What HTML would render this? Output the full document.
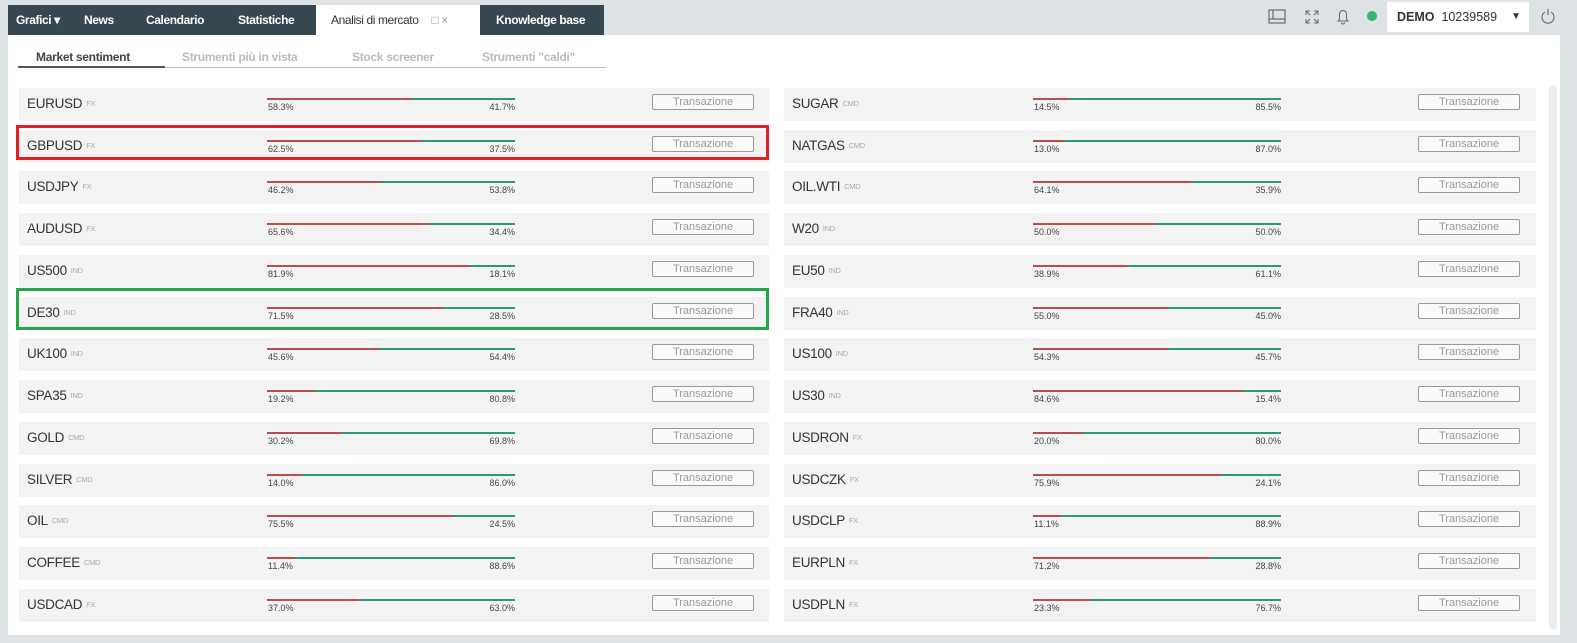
<!DOCTYPE html>
<html><head><meta charset="utf-8"><style>
*{margin:0;padding:0;box-sizing:border-box}
body{width:1577px;height:643px;background:#dde2e5;font-family:"Liberation Sans",sans-serif;position:relative;overflow:hidden}
.tabs{position:absolute;left:8px;top:5px;height:30px;width:596px;background:#37474f}
.tab{position:absolute;top:0;height:30px;line-height:30px;color:#fff;font-size:12px;font-weight:bold;letter-spacing:-0.4px}
.act{background:#fff;color:#333;font-weight:normal}
.panel{position:absolute;left:8px;top:35px;width:1552px;height:600px;background:#fff}
.sub{position:absolute;top:50px;font-size:12px;font-weight:bold;color:#bbb;letter-spacing:-0.3px}
.row{position:absolute;height:33px;background:#f3f3f3;width:750px}
.n{position:absolute;left:8px;top:8px;font-size:13.5px;color:#333;letter-spacing:-0.3px}
.n small{font-size:7.5px;color:#aaa;margin-left:4px;vertical-align:2px}
.b{position:absolute;left:248px;top:10px;width:248px;height:2px;background:#2b9a78}
.b i{display:block;height:2px;background:#b5504c}
.p1,.p2{position:absolute;top:14px;font-size:9px;color:#444}
.p1{left:249px}.p2{left:436px;width:60px;text-align:right}
.t{position:absolute;left:633px;top:6px;width:102px;height:16px;border:1px solid #999;border-radius:2px;font-size:11px;color:#999;display:flex;align-items:center;justify-content:center;background:#fafafa}
.box{position:absolute;border:3px solid;}
</style></head><body>
<div class="tabs">
<div class="tab" style="left:8px">Grafici ▾</div>
<div class="tab" style="left:76px">News</div>
<div class="tab" style="left:138px">Calendario</div>
<div class="tab" style="left:230px">Statistiche</div>
<div class="tab act" style="left:308px;width:164px;padding-left:15px">Analisi di mercato <span style="color:#999;margin-left:10px">□ ×</span></div>
<div class="tab" style="left:488px">Knowledge base</div>
</div>
<svg style="position:absolute;left:1268px;top:9px" width="18" height="16"><rect x="1" y="1" width="16" height="13" fill="none" stroke="#555"/><line x1="1" y1="10" x2="17" y2="10" stroke="#555"/><line x1="5" y1="1" x2="5" y2="10" stroke="#555"/></svg>
<svg style="position:absolute;left:1304px;top:9px" width="16" height="16" stroke="#666" fill="none"><path d="M2 6V2H6M10 2H14V6M14 10V14H10M6 14H2V10M2 2L6 6M14 2L10 6M14 14L10 10M2 14L6 10"/></svg>
<svg style="position:absolute;left:1336px;top:8px" width="14" height="17" stroke="#666" fill="none"><path d="M2 13H12L10.5 11V6A3.5 3.5 0 0 0 3.5 6V11Z M5.5 14.5A1.5 1.5 0 0 0 8.5 14.5"/></svg>
<div style="position:absolute;left:1367px;top:11px;width:10px;height:10px;border-radius:50%;background:#2bb673"></div>
<div style="position:absolute;left:1387px;top:2px;width:142px;height:30px;background:#fff;font-size:12.5px;line-height:30px;color:#333;padding-left:10px"><b>DEMO</b>&nbsp; 10239589 <span style="position:absolute;right:8px;font-size:10px">▼</span></div>
<svg style="position:absolute;left:1540px;top:8px" width="16" height="17" stroke="#555" fill="none"><path d="M5 4A6 6 0 1 0 11 4M8 1V7"/></svg>
<div class="panel"></div>
<div style="position:absolute;left:18px;top:67px;width:588px;height:1px;background:#bbb"></div>
<div style="position:absolute;left:18px;top:66px;width:147px;height:2px;background:#555"></div>
<div class="sub" style="left:36px;color:#444">Market sentiment</div>
<div class="sub" style="left:182px">Strumenti più in vista</div>
<div class="sub" style="left:352px">Stock screener</div>
<div class="sub" style="left:482px">Strumenti "caldi"</div>
<div style="position:absolute;left:1549px;top:85px;width:8px;height:545px;background:#eee;border-radius:4px"></div>

<div class="row" style="left:19px;top:88px"><div class="n">EURUSD<small>FX</small></div><div class="b"><i style="width:58.3%"></i></div><div class="p1">58.3%</div><div class="p2">41.7%</div><div class="t">Transazione</div></div>
<div class="row" style="left:19px;top:130px"><div class="n">GBPUSD<small>FX</small></div><div class="b"><i style="width:62.5%"></i></div><div class="p1">62.5%</div><div class="p2">37.5%</div><div class="t">Transazione</div></div>
<div class="row" style="left:19px;top:171px"><div class="n">USDJPY<small>FX</small></div><div class="b"><i style="width:46.2%"></i></div><div class="p1">46.2%</div><div class="p2">53.8%</div><div class="t">Transazione</div></div>
<div class="row" style="left:19px;top:213px"><div class="n">AUDUSD<small>FX</small></div><div class="b"><i style="width:65.6%"></i></div><div class="p1">65.6%</div><div class="p2">34.4%</div><div class="t">Transazione</div></div>
<div class="row" style="left:19px;top:255px"><div class="n">US500<small>IND</small></div><div class="b"><i style="width:81.9%"></i></div><div class="p1">81.9%</div><div class="p2">18.1%</div><div class="t">Transazione</div></div>
<div class="row" style="left:19px;top:297px"><div class="n">DE30<small>IND</small></div><div class="b"><i style="width:71.5%"></i></div><div class="p1">71.5%</div><div class="p2">28.5%</div><div class="t">Transazione</div></div>
<div class="row" style="left:19px;top:338px"><div class="n">UK100<small>IND</small></div><div class="b"><i style="width:45.6%"></i></div><div class="p1">45.6%</div><div class="p2">54.4%</div><div class="t">Transazione</div></div>
<div class="row" style="left:19px;top:380px"><div class="n">SPA35<small>IND</small></div><div class="b"><i style="width:19.2%"></i></div><div class="p1">19.2%</div><div class="p2">80.8%</div><div class="t">Transazione</div></div>
<div class="row" style="left:19px;top:422px"><div class="n">GOLD<small>CMD</small></div><div class="b"><i style="width:30.2%"></i></div><div class="p1">30.2%</div><div class="p2">69.8%</div><div class="t">Transazione</div></div>
<div class="row" style="left:19px;top:464px"><div class="n">SILVER<small>CMD</small></div><div class="b"><i style="width:14%"></i></div><div class="p1">14.0%</div><div class="p2">86.0%</div><div class="t">Transazione</div></div>
<div class="row" style="left:19px;top:505px"><div class="n">OIL<small>CMD</small></div><div class="b"><i style="width:75.5%"></i></div><div class="p1">75.5%</div><div class="p2">24.5%</div><div class="t">Transazione</div></div>
<div class="row" style="left:19px;top:547px"><div class="n">COFFEE<small>CMD</small></div><div class="b"><i style="width:11.4%"></i></div><div class="p1">11.4%</div><div class="p2">88.6%</div><div class="t">Transazione</div></div>
<div class="row" style="left:19px;top:589px"><div class="n">USDCAD<small>FX</small></div><div class="b"><i style="width:37%"></i></div><div class="p1">37.0%</div><div class="p2">63.0%</div><div class="t">Transazione</div></div>

<div class="row" style="left:784px;top:88px;width:752px"><div class="n">SUGAR<small>CMD</small></div><div class="b" style="left:249px"><i style="width:14.5%"></i></div><div class="p1" style="left:250px">14.5%</div><div class="p2" style="left:437px">85.5%</div><div class="t" style="left:634px">Transazione</div></div>
<div class="row" style="left:784px;top:130px;width:752px"><div class="n">NATGAS<small>CMD</small></div><div class="b" style="left:249px"><i style="width:13%"></i></div><div class="p1" style="left:250px">13.0%</div><div class="p2" style="left:437px">87.0%</div><div class="t" style="left:634px">Transazione</div></div>
<div class="row" style="left:784px;top:171px;width:752px"><div class="n">OIL.WTI<small>CMD</small></div><div class="b" style="left:249px"><i style="width:64.1%"></i></div><div class="p1" style="left:250px">64.1%</div><div class="p2" style="left:437px">35.9%</div><div class="t" style="left:634px">Transazione</div></div>
<div class="row" style="left:784px;top:213px;width:752px"><div class="n">W20<small>IND</small></div><div class="b" style="left:249px"><i style="width:50%"></i></div><div class="p1" style="left:250px">50.0%</div><div class="p2" style="left:437px">50.0%</div><div class="t" style="left:634px">Transazione</div></div>
<div class="row" style="left:784px;top:255px;width:752px"><div class="n">EU50<small>IND</small></div><div class="b" style="left:249px"><i style="width:38.9%"></i></div><div class="p1" style="left:250px">38.9%</div><div class="p2" style="left:437px">61.1%</div><div class="t" style="left:634px">Transazione</div></div>
<div class="row" style="left:784px;top:297px;width:752px"><div class="n">FRA40<small>IND</small></div><div class="b" style="left:249px"><i style="width:55%"></i></div><div class="p1" style="left:250px">55.0%</div><div class="p2" style="left:437px">45.0%</div><div class="t" style="left:634px">Transazione</div></div>
<div class="row" style="left:784px;top:338px;width:752px"><div class="n">US100<small>IND</small></div><div class="b" style="left:249px"><i style="width:54.3%"></i></div><div class="p1" style="left:250px">54.3%</div><div class="p2" style="left:437px">45.7%</div><div class="t" style="left:634px">Transazione</div></div>
<div class="row" style="left:784px;top:380px;width:752px"><div class="n">US30<small>IND</small></div><div class="b" style="left:249px"><i style="width:84.6%"></i></div><div class="p1" style="left:250px">84.6%</div><div class="p2" style="left:437px">15.4%</div><div class="t" style="left:634px">Transazione</div></div>
<div class="row" style="left:784px;top:422px;width:752px"><div class="n">USDRON<small>FX</small></div><div class="b" style="left:249px"><i style="width:20%"></i></div><div class="p1" style="left:250px">20.0%</div><div class="p2" style="left:437px">80.0%</div><div class="t" style="left:634px">Transazione</div></div>
<div class="row" style="left:784px;top:464px;width:752px"><div class="n">USDCZK<small>FX</small></div><div class="b" style="left:249px"><i style="width:75.9%"></i></div><div class="p1" style="left:250px">75.9%</div><div class="p2" style="left:437px">24.1%</div><div class="t" style="left:634px">Transazione</div></div>
<div class="row" style="left:784px;top:505px;width:752px"><div class="n">USDCLP<small>FX</small></div><div class="b" style="left:249px"><i style="width:11.1%"></i></div><div class="p1" style="left:250px">11.1%</div><div class="p2" style="left:437px">88.9%</div><div class="t" style="left:634px">Transazione</div></div>
<div class="row" style="left:784px;top:547px;width:752px"><div class="n">EURPLN<small>FX</small></div><div class="b" style="left:249px"><i style="width:71.2%"></i></div><div class="p1" style="left:250px">71.2%</div><div class="p2" style="left:437px">28.8%</div><div class="t" style="left:634px">Transazione</div></div>
<div class="row" style="left:784px;top:589px;width:752px"><div class="n">USDPLN<small>FX</small></div><div class="b" style="left:249px"><i style="width:23.3%"></i></div><div class="p1" style="left:250px">23.3%</div><div class="p2" style="left:437px">76.7%</div><div class="t" style="left:634px">Transazione</div></div>

<div class="box" style="left:16px;top:125px;width:753px;height:35px;border-color:#e31e24"></div>
<div class="box" style="left:16px;top:288px;width:753px;height:42px;border-color:#22a84a"></div>
</body></html>
